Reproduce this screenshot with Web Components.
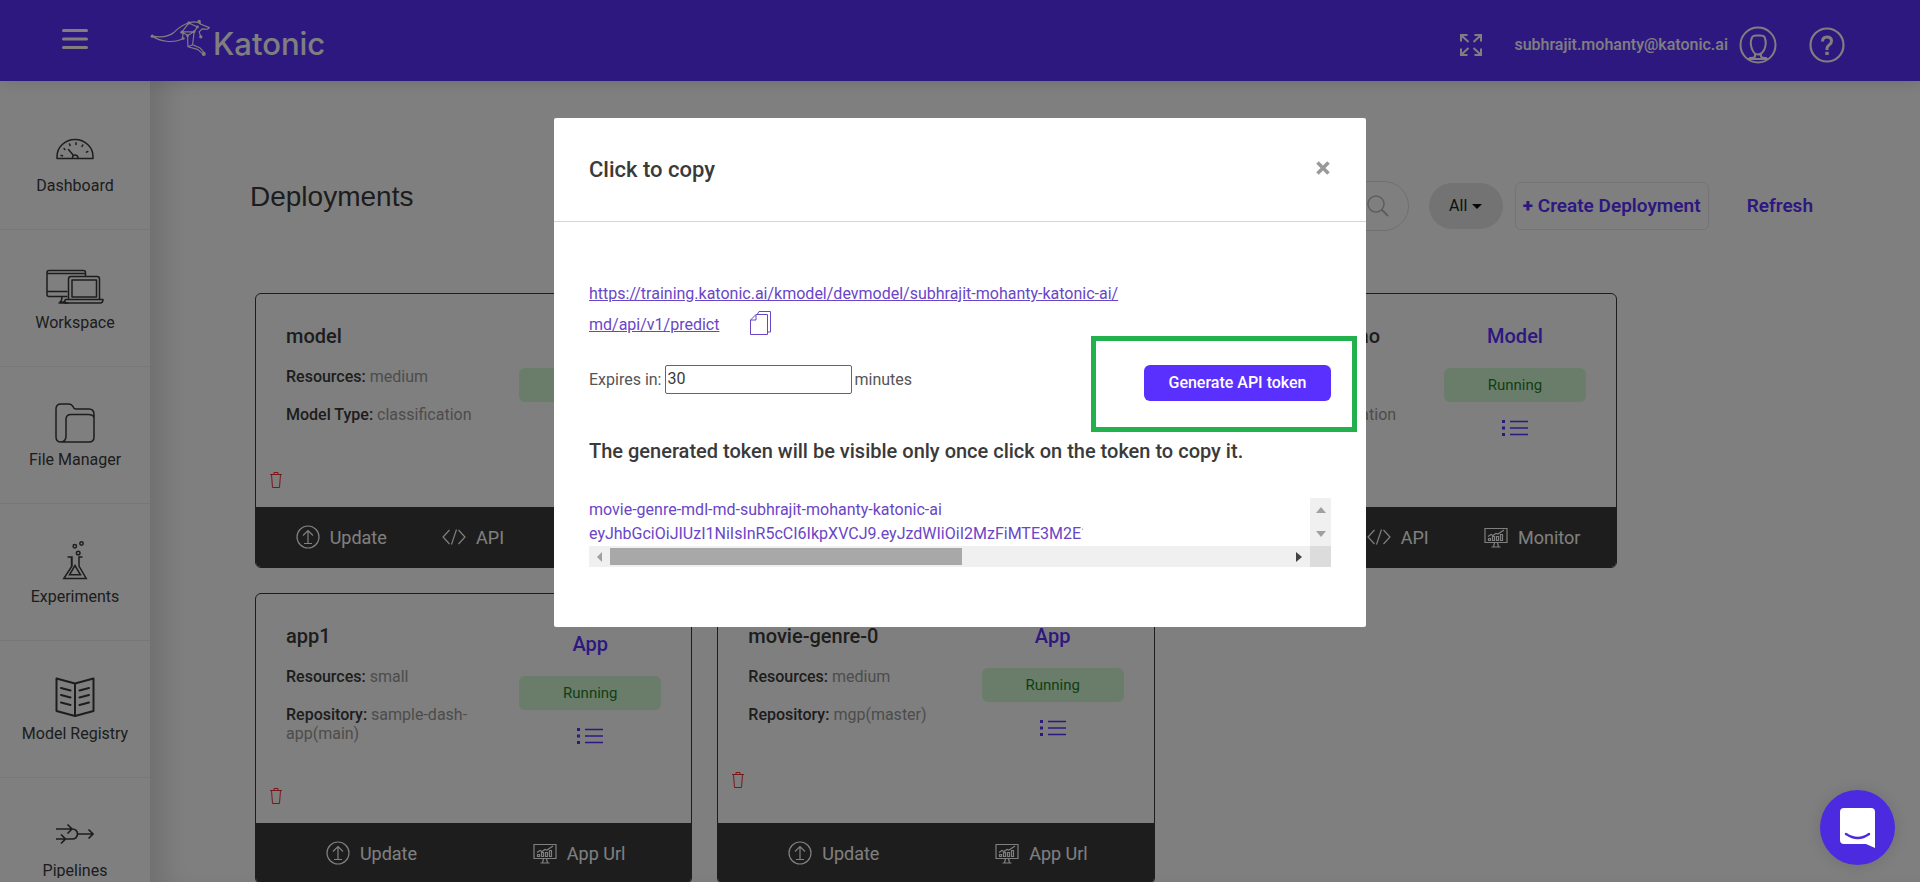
<!DOCTYPE html>
<html lang="en">
<head>
<meta charset="utf-8">
<title>Katonic - Deployments</title>
<style>
  html, body { height: 100%; margin: 0; }
  body { font-family: Roboto, "Liberation Sans", sans-serif; font-size: 16px; line-height: 20px; color: #3a3a3a; background: #fff; overflow: hidden; }
</style>
</head>
<body>
<katonic-app></katonic-app>

<script>
const ICONS = {
  menu: ['0 0 26 20', '<g stroke="currentColor" stroke-width="3" stroke-linecap="round"><path d="M1.5 1.500h23M1.500 10h23M1.500 18.500h23"/></g>'],
  kangaroo: ['449 54 183 115', '<g fill="none" stroke="currentColor" stroke-width="3.500" stroke-linejoin="round"><path d="M455 106C480 110 505 108 520 95C532 84 545 70 566 66L592 78M455 106C480 122 515 128 545 115L549 97M566 66Q590 58 602 70L628 80L622 85L606 84L597 93L602 108M597 60L602 70M566 66L545 93L582 92L592 78M545 93L562 104L563 138L592 146L610 161M582 92L577 132L600 142L614 158M562 104L582 92M563 138L577 132"/></g><g fill="currentColor"><circle cx="455" cy="106" r="5"/><circle cx="566" cy="66" r="5"/><circle cx="597" cy="61" r="5"/><circle cx="545" cy="94" r="5"/><circle cx="592" cy="78" r="4"/><circle cx="602" cy="108" r="5"/><circle cx="562" cy="105" r="4"/><circle cx="549" cy="113" r="4"/><circle cx="611" cy="160" r="6"/><circle cx="582" cy="92" r="4"/></g>'],
  expand: ['0 0 22 22', '<g fill="none" stroke="currentColor" stroke-width="2"><path d="M1 7.500V1h6.500M1 1l7.500 7M14.500 1H21v6.500M21 1l-7.500 7M1 14.500V21h6.500M1 21l7.500-7M14.500 21H21v-6.500M21 21l-7.500-7"/></g>'],
  user: ['0 0 38 38', '<g fill="none" stroke="currentColor" stroke-width="2"><circle cx="19" cy="19" r="17.500"/><path d="M13 11.500Q14 9 19 9.500Q24.500 9 25.500 11Q28 17 25.500 23Q23 28.500 19 28.500Q15 28.500 13 23Q10.500 17 13 11.500ZM16 28v2.500q-1 2-6 1.500M22 28v2.500q1 2 6 1.500M9 33h20"/></g>'],
  help: ['0 0 36 36', '<g fill="none" stroke="currentColor"><circle cx="18" cy="18" r="16.500" stroke-width="2.200"/><path d="M13.500 14.500q0-4.500 4.500-4.500t4.500 4q0 2.200-2.300 3.900T18 21.500v1.500" stroke-width="3"/></g><rect x="16.300" y="24.800" width="3.400" height="3.200" fill="currentColor"/>'],
  dashboard: ['0 0 38 40', '<g fill="none" stroke="currentColor" stroke-width="1.500" stroke-linecap="round" stroke-linejoin="round"><path d="M1 29.500v-2a18 17 0 0 1 36 0v2zM16.500 28.500q0-2.500 2.500-2.500t3 2.500M17.500 26.500l-5-6"/><path d="M5 26.500l1.500.3M8 19.500l1 1M13.500 15l.6 1.600M20 13.800v1.600M26.800 16l-.8 1.400M31.800 22.500l-1.400.6"/></g>'],
  workspace: ['0 0 58 40', '<g fill="none" stroke="currentColor" stroke-width="1.500" stroke-linejoin="round"><path d="M21.500 30.500H3q-2 0-2-2v-22q0-2 2-2h34.500q2 0 2 2V10M1 7.500h38M1 25.500h20.500M16 30.500q0 4-2 5.500h6M12.500 37h10"/><path d="M22.500 33V13q0-2.500 2.500-2.500h26q2.500 0 2.500 2.500v20M26 14h24.500v17H26zM19.500 33.500h37.500q0 3.500-3 3.500H19q-2 0 .5-3.500z"/></g>'],
  folder: ['0 0 40 40', '<g fill="none" stroke="currentColor" stroke-width="1.500"><path d="M11 39H6q-5 0-5-5V6q0-5 5-5h7.500q3.500 0 5 3.500Q19 6 21 6h13q5 0 5 5.500V34q0 5-5 5H6q5-.5 5-6V16.500q0-5 5-5h17q6 0 6 4"/></g>'],
  flask: ['0 0 26 40', '<g fill="none" stroke="currentColor" stroke-width="1.500"><circle cx="19.500" cy="3.500" r="1.700"/><circle cx="12.800" cy="6.200" r="1.700"/><circle cx="16.200" cy="13" r="1.800"/><path d="M5.500 17H10v9L1.800 38.500h22.400L17 26v-9h3.500M9.500 17v9M13 25.500L7.500 34.800h11z"/></g>'],
  book: ['0 0 40 40', '<g fill="none" stroke="currentColor" stroke-width="2" stroke-linecap="round" stroke-linejoin="round"><path d="M20 6.500L1.500 1.500V34L20 39l18.500-5V1.500zM20 6.500V39M6 11l9.500 2.500M6 18l9.500 2.500M6 25.500l9.500 2.500M34 11l-9.500 2.500M34 18l-9.500 2.500M34 25.500L24.500 28"/></g>'],
  pipeline: ['0 0 38 40', '<g fill="none" stroke="currentColor" stroke-width="1.700"><path d="M0 15h16.500a5 5 0 0 1 0 10H0M22 20h15M11.500 10.500l4.500 4.500-4.500 4.500M5 20.500L9.500 25 5 29.500M32.500 15.500L37 20l-4.500 4.500"/></g>'],
  search: ['0 0 22 22', '<g fill="none" stroke="currentColor" stroke-width="1.500"><circle cx="9" cy="9" r="8"/><path d="M14.500 14.500L21 21" stroke-width="2"/></g>'],
  trash: ['0 0 12 16', '<g fill="none" stroke="currentColor" stroke-width="1"><path d="M0 2.500h12M4 2.500v-2h4v2M1.500 2.500l1 13h7l1-13"/></g>'],
  list: ['0 0 26 18', '<g fill="currentColor"><rect x="0" y="1" width="3" height="3"/><rect x="0" y="7.500" width="3" height="3"/><rect x="0" y="14" width="3" height="3"/></g><path d="M8 2.500h18M8 9h18M8 15.500h18" stroke="currentColor" stroke-width="1.500"/>'],
  update: ['0 0 24 24', '<g fill="none" stroke="currentColor" stroke-width="1.200"><circle cx="12" cy="12" r="11"/><path d="M12 18.500V5.500M7 10.500l5-5 5 5M8 18.500h8"/></g>'],
  api: ['0 0 24 24', '<g fill="none" stroke="currentColor" stroke-width="1.200"><path d="M7.500 5L1 12l6.500 7M16.500 5L23 12l-6.500 7M14.500 4.500L9.500 19.500"/></g>'],
  monitor: ['0 0 24 24', '<g fill="none" stroke="currentColor" stroke-width="1.200"><path d="M1 3.500h22v14H1zM10.500 17.500L9.500 22M13.500 17.500l1 4.500M7.500 22h9M4 11.500l3-2 2 1 3-2 2 .5 6-4"/><path d="M4.500 15.500v-2h2v2zM8.500 15.500v-4h2v4zM12.500 15.500v-4h2v4zM16.500 15.500v-6h2v6z"/></g>'],
  copy: ['0 0 21 24', '<g fill="none" stroke="currentColor" stroke-width="1"><path d="M6 3.500h11.500v20h-17V9L6 3.500V9H.5M7.500 3.500v-.5L9 .5h11.500v20.500h-3"/></g>'],
  close: ['0 0 14 14', '<path d="M1.500 1.500l11 11M12.500 1.500l-11 11" stroke="currentColor" stroke-width="3.500"/>'],
  chat: ['0 0 36 40', '<path d="M4 0h27q4 0 4 4v36l-9-4H4q-4 0-4-4V4q0-4 4-4z" fill="#fff"/><path d="M6 26q12 8 23 0" fill="none" stroke="currentColor" stroke-width="2.500" stroke-linecap="round"/>']
};

class BaseElement extends HTMLElement {
  connectedCallback() {
    if (this.shadowRoot) return;
    this.attachShadow({ mode: 'open' }).innerHTML =
      '<style>*{box-sizing:border-box}button{font:inherit;color:inherit;background:none;border:0;padding:0;margin:0;cursor:pointer}a{color:inherit;text-decoration:none}h1,h2,h3,p{margin:0;font-weight:inherit}</style>' + this.render();
  }
}

customElements.define('k-icon', class extends BaseElement {
  render() {
    const [box, body] = ICONS[this.getAttribute('name')];
    const [, , w, h] = box.split(' ');
    const width = this.getAttribute('width') || w;
    const height = this.getAttribute('height') || h;
    return `<style>:host{display:inline-flex;flex:none}svg{display:block}</style>
      <svg viewBox="${box}" width="${width}" height="${height}" aria-hidden="true">${body}</svg>`;
  }
});

customElements.define('k-header', class extends BaseElement {
  render() {
    return `<style>
      :host{display:flex;align-items:center;height:81px;padding:0 75px 0 62px;background:#5a30ff;color:#fff;position:relative;z-index:2;box-shadow:0 0 16px rgba(0,0,0,.15);box-sizing:border-box}
      .menu{margin:0 62px 4px 0}
      .logo{display:flex;align-items:center;gap:2px;font:500 31px/40px Inter,Lato,sans-serif}
      .logo k-icon{margin-bottom:6px}
      .logo span{padding-top:6px}
      nav{margin-left:auto;display:flex;align-items:center;padding-top:8px}
      .account{display:flex;align-items:center;gap:11px;margin:0 32px;font-weight:500}
      button{display:flex}
    </style>
    <button class="menu" aria-label="Menu"><k-icon name="menu"></k-icon></button>
    <a class="logo" href="#"><k-icon name="kangaroo" width="61" height="38"></k-icon><span>Katonic</span></a>
    <nav>
      <button aria-label="Full screen"><k-icon name="expand"></k-icon></button>
      <a class="account" href="#">subhrajit.mohanty@katonic.ai<k-icon name="user"></k-icon></a>
      <button aria-label="Help"><k-icon name="help"></k-icon></button>
    </nav>`;
  }
});

customElements.define('k-nav-item', class extends BaseElement {
  render() {
    return `<style>
      :host{display:block;border-bottom:1px solid #eee}
      a{display:flex;flex-direction:column;align-items:center;gap:7px;padding:36px 0 33px}
    </style>
    <a href="#"><k-icon name="${this.getAttribute('icon')}"></k-icon><span><slot></slot></span></a>`;
  }
});

customElements.define('k-sidebar', class extends BaseElement {
  render() {
    return `<style>
      :host{display:block;flex:none;width:150px;padding-top:12px;margin-bottom:4px;overflow:clip;background:#fff;box-sizing:border-box}
    </style>
    <nav>
      <k-nav-item icon="dashboard">Dashboard</k-nav-item>
      <k-nav-item icon="workspace">Workspace</k-nav-item>
      <k-nav-item icon="folder">File Manager</k-nav-item>
      <k-nav-item icon="flask">Experiments</k-nav-item>
      <k-nav-item icon="book">Model Registry</k-nav-item>
      <k-nav-item icon="pipeline">Pipelines</k-nav-item>
    </nav>`;
  }
});

customElements.define('k-toolbar', class extends BaseElement {
  render() {
    return `<style>
      :host{display:flex;align-items:center;height:50px;padding-right:7px}
      h1{font:28px/32px "Liberation Sans",Arial,sans-serif;margin-bottom:18px}
      .actions{margin-left:auto;display:flex;align-items:center}
      .search{display:flex;align-items:center;width:300px;height:50px;border:1px solid #e0e0e0;border-radius:25px;padding:0 19px 0 24px;margin-right:20px;color:#bbb}
      input{flex:1;min-width:0;border:0;outline:0;background:none;font:inherit}
      .all{display:flex;align-items:center;justify-content:center;gap:5px;width:74px;height:46px;border-radius:23px;background:#e6e6e6;color:#222;margin-right:12px}
      .all::after{content:"";border:5px solid transparent;border-top-color:#111;border-bottom:0}
      .create,.refresh{color:#5a30ff;font-size:19px;font-weight:600}
      .create{height:48px;width:194px;border:1px solid #e8e8e8;border-radius:6px;white-space:nowrap}
      .refresh{margin-left:38px}
    </style>
    <h1>Deployments</h1>
    <div class="actions">
      <label class="search"><input type="text" aria-label="Search"><k-icon name="search"></k-icon></label>
      <button class="all">All</button>
      <button class="create"><b>+</b> Create Deployment</button>
      <button class="refresh">Refresh</button>
    </div>`;
  }
});

customElements.define('k-deployment', class extends BaseElement {
  render() {
    const a = n => this.getAttribute(n);
    const actions = a('kind') === 'Model'
      ? [['update', 'Update'], ['api', 'API'], ['monitor', 'Monitor']]
      : [['update', 'Update'], ['monitor', 'App Url']];
    return `<style>
      :host{display:flex;flex-direction:column;border:1px solid #3a3a3a;border-radius:6px;overflow:hidden;box-sizing:border-box}
      .info{display:grid;grid-template-columns:1fr 142px;column-gap:34px;align-items:center;padding:30px 30px 0}
      .text{align-self:start;padding-bottom:10px;line-height:19px;color:#999}
      h2,.kind{font-size:20px;line-height:24px;font-weight:500}
      h2{color:#3a3a3a;white-space:nowrap;margin-bottom:19px}
      p+p{margin-top:19px}
      b{font-weight:500;color:#3a3a3a}
      .state{display:flex;flex-direction:column;align-items:center;color:#5a30ff}
      .pill{width:100%;margin:20px 0 17px;border-radius:6px;background:#d2fad4;color:#1f7f28;text-align:center;font-size:15px;line-height:34px}
      button{display:flex}
      .trash{color:#ee3038;margin:35px 0 19px 14px;align-self:flex-start}
      footer{display:flex;justify-content:space-around;align-items:center;margin-top:auto;height:60px;padding:2px 8px 0 12px;background:#3a3a3a;color:#fff;font-size:18px}
      footer a{display:flex;align-items:center;gap:10px}
      footer k-icon{margin-bottom:2px}
    </style>
    <div class="info">
      <div class="text">
        <h2>${a('name')}</h2>
        <p><b>Resources:</b> ${a('resources')}</p>
        <p><b>${a('label')}:</b> ${a('value')}</p>
      </div>
      <div class="state">
        <span class="kind">${a('kind')}</span>
        <span class="pill">Running</span>
        <button aria-label="Details"><k-icon name="list"></k-icon></button>
      </div>
    </div>
    <button class="trash" aria-label="Delete"><k-icon name="trash"></k-icon></button>
    <footer>${actions.map(([i, t]) => `<a href="#"><k-icon name="${i}"></k-icon>${t}</a>`).join('')}</footer>`;
  }
});

customElements.define('k-deployments', class extends BaseElement {
  render() {
    return `<style>
      :host{display:block;flex:1;min-width:0;padding:100px 100px 0;box-sizing:border-box;box-shadow:inset 28px 0 28px -14px rgba(0,0,0,.13)}
      .grid{display:grid;grid-template-columns:repeat(auto-fill,minmax(420px,1fr));gap:25px;margin:62px 203px 0 5px}
    </style>
    <k-toolbar></k-toolbar>
    <div class="grid">
      <k-deployment name="model" kind="Model" resources="medium" label="Model Type" value="classification"></k-deployment>
      <k-deployment name="movie-genre-mdl" kind="Model" resources="medium" label="Model Type" value="classification"></k-deployment>
      <k-deployment name="movie-genre-demo" kind="Model" resources="medium" label="Model Type" value="classification"></k-deployment>
      <k-deployment name="app1" kind="App" resources="small" label="Repository" value="sample-dash-app(main)"></k-deployment>
      <k-deployment name="movie-genre-0" kind="App" resources="medium" label="Repository" value="mgp(master)"></k-deployment>
    </div>`;
  }
});

customElements.define('k-token-list', class extends BaseElement {
  render() {
    return `<style>
      :host{display:grid;grid-template-columns:1fr 21px;grid-template-rows:48px 21px;color:#6a45c8}
      .lines{overflow:hidden;line-height:24px;white-space:nowrap}
      .lines p{width:494px;overflow:hidden}
      .v,.h{display:flex;justify-content:space-between;align-items:center;background:#f0f0f0}
      .v{flex-direction:column;padding:9px 0}
      .h{padding:0 8px}
      .thumb{flex:none;width:352px;height:17px;background:#a8a8a8;margin:0 auto 0 8px}
      .corner{background:#dcdcdc}
      i{border:5px solid transparent;flex:none}
      .up{border-top:0;border-bottom:6px solid #a0a0a0}
      .down{border-bottom:0;border-top:6px solid #a0a0a0}
      .left{border-left:0;border-right:5px solid #a0a0a0}
      .right{border-right:0;border-left:6px solid #444}
    </style>
    <div class="lines"><p>movie-genre-mdl-md-subhrajit-mohanty-katonic-ai</p><p>eyJhbGciOiJIUzI1NiIsInR5cCI6IkpXVCJ9.eyJzdWIiOiI2MzFiMTE3M2E1</p></div>
    <div class="v"><i class="up"></i><i class="down"></i></div>
    <div class="h"><i class="left"></i><span class="thumb"></span><i class="right"></i></div>
    <div class="corner"></div>`;
  }
});

customElements.define('k-copy-dialog', class extends BaseElement {
  render() {
    return `<style>
      :host{position:fixed;inset:0;z-index:5;display:flex;justify-content:center;align-items:flex-start;padding-top:118px;background:rgba(0,0,0,.5);box-sizing:border-box}
      .dialog{width:812px;max-width:100%;background:#fff;border-radius:2px}
      header{display:flex;align-items:center;justify-content:space-between;height:104px;padding:0 36px 0 35px;border-bottom:1px solid #d4d4d4}
      h2{font-size:22px;line-height:28px;font-weight:500}
      .close{color:#999;display:flex;margin-bottom:4px}
      .body{padding:56px 35px 60px}
      .url{line-height:31px;color:#6a45c8}
      .url a{text-decoration:underline}
      .url span{display:flex;align-items:center;gap:31px;height:31px}
      .url button{display:flex;margin-bottom:4px}
      form{display:flex;align-items:flex-start;justify-content:space-between;margin-top:25px;color:#555}
      label{display:flex;align-items:center;gap:3px}
      input{width:187px;height:29px;border:1px solid #666;border-radius:2px;padding:0 2px 2px;font:inherit;color:#3a3a3a}
      .generate{position:relative;width:187px;height:36px;border-radius:6px;background:#5a30ff;color:#fff;font-weight:500}
      .mark{position:absolute;inset:-29px -26px -31px -53px;border:5px solid #22b14c;pointer-events:none}
      h3{font-size:20px;line-height:24px;font-weight:500;margin:38px 0 35px}
    </style>
    <section class="dialog" role="dialog" aria-label="Click to copy">
      <header><h2>Click to copy</h2><button class="close" aria-label="Close"><k-icon name="close"></k-icon></button></header>
      <div class="body">
        <div class="url"><a href="#">https://training.katonic.ai/kmodel/devmodel/subhrajit-mohanty-katonic-ai/</a><span><a href="#">md/api/v1/predict</a><button aria-label="Copy"><k-icon name="copy"></k-icon></button></span></div>
        <form onsubmit="return false">
          <label>Expires in: <input type="text" value="30"> minutes</label>
          <button class="generate">Generate API token<span class="mark"></span></button>
        </form>
        <h3>The generated token will be visible only once click on the token to copy it.</h3>
        <k-token-list></k-token-list>
      </div>
    </section>`;
  }
});

customElements.define('k-chat-launcher', class extends BaseElement {
  render() {
    return `<style>
      :host{position:fixed;right:25px;bottom:17px;z-index:6}
      button{display:flex;align-items:center;justify-content:center;width:75px;height:75px;border-radius:50%;background:#4c2ae0;color:#4c2ae0;box-shadow:0 1px 16px rgba(0,0,0,.12)}
    </style>
    <button aria-label="Open chat"><k-icon name="chat"></k-icon></button>`;
  }
});

customElements.define('katonic-app', class extends BaseElement {
  render() {
    return `<style>
      :host{display:flex;flex-direction:column;height:100%}
      .page{flex:1;display:flex;min-height:0}
    </style>
    <k-header></k-header>
    <div class="page"><k-sidebar></k-sidebar><k-deployments></k-deployments></div>
    <k-copy-dialog></k-copy-dialog>
    <k-chat-launcher></k-chat-launcher>`;
  }
});
</script>
</body>
</html>
